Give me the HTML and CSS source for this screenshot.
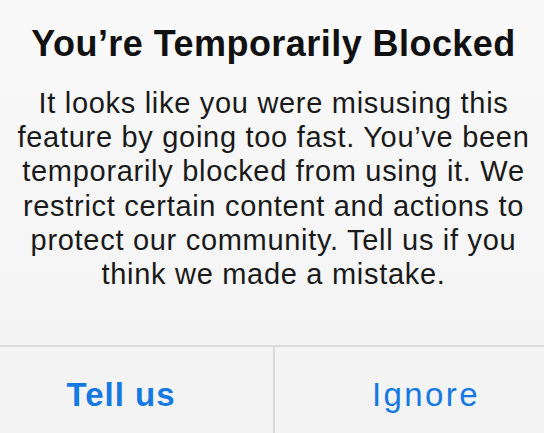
FILE: index.html
```html
<!DOCTYPE html>
<html>
<head>
<meta charset="utf-8">
<link rel="stylesheet" href="styles.css">
</head>
<body>
<div class="dialog">
  <div class="content">
    <h1 class="title">You’re Temporarily Blocked</h1>
    <p class="message">It looks like you were misusing this<br>feature by going too fast. You’ve been<br>temporarily blocked from using it. We<br>restrict certain content and actions to<br>protect our community. Tell us if you<br>think we made a mistake.</p>
  </div>
  <div class="actions">
    <div class="btn btn-primary">Tell us</div>
    <div class="btn btn-secondary">Ignore</div>
  </div>
</div>
</body>
</html>
```

FILE: styles.css
```css
html, body {
  margin: 0;
  padding: 0;
  overflow: hidden;
  height: 100%;
}
body {
  background: #f6f6f6;
  font-family: "Liberation Sans", Arial, sans-serif;
}
.dialog {
  display: flex;
  flex-direction: column;
  height: 100%;
  background: linear-gradient(#f9f9f9, #f3f3f3);
}
.content {
  padding: 22px 0 0 3px;
  height: 345px;
  flex: none;
  box-sizing: border-box;
  text-align: center;
}
.title {
  margin: 0;
  font-size: 36px;
  line-height: 44px;
  font-weight: bold;
  letter-spacing: 0.45px;
  color: #111;
}
.message {
  margin: 20px 0 0;
  font-size: 29px;
  line-height: 34.2px;
  letter-spacing: 0.7px;
  color: #1a1a1a;
}
.actions {
  flex: 1;
  display: grid;
  grid-template-columns: 275px 1fr;
  border-top: 2px solid #dcdcdc;
}
.btn {
  text-align: center;
  padding-top: 28px;
  font-size: 33px;
  line-height: 40px;
  color: #1579e3;
}
.btn-primary {
  padding-right: 31px;
  font-weight: bold;
  letter-spacing: 1px;
  border-right: 2px solid #d9d9d9;
}
.btn-secondary {
  padding-left: 33px;
  letter-spacing: 2.4px;
}
```
